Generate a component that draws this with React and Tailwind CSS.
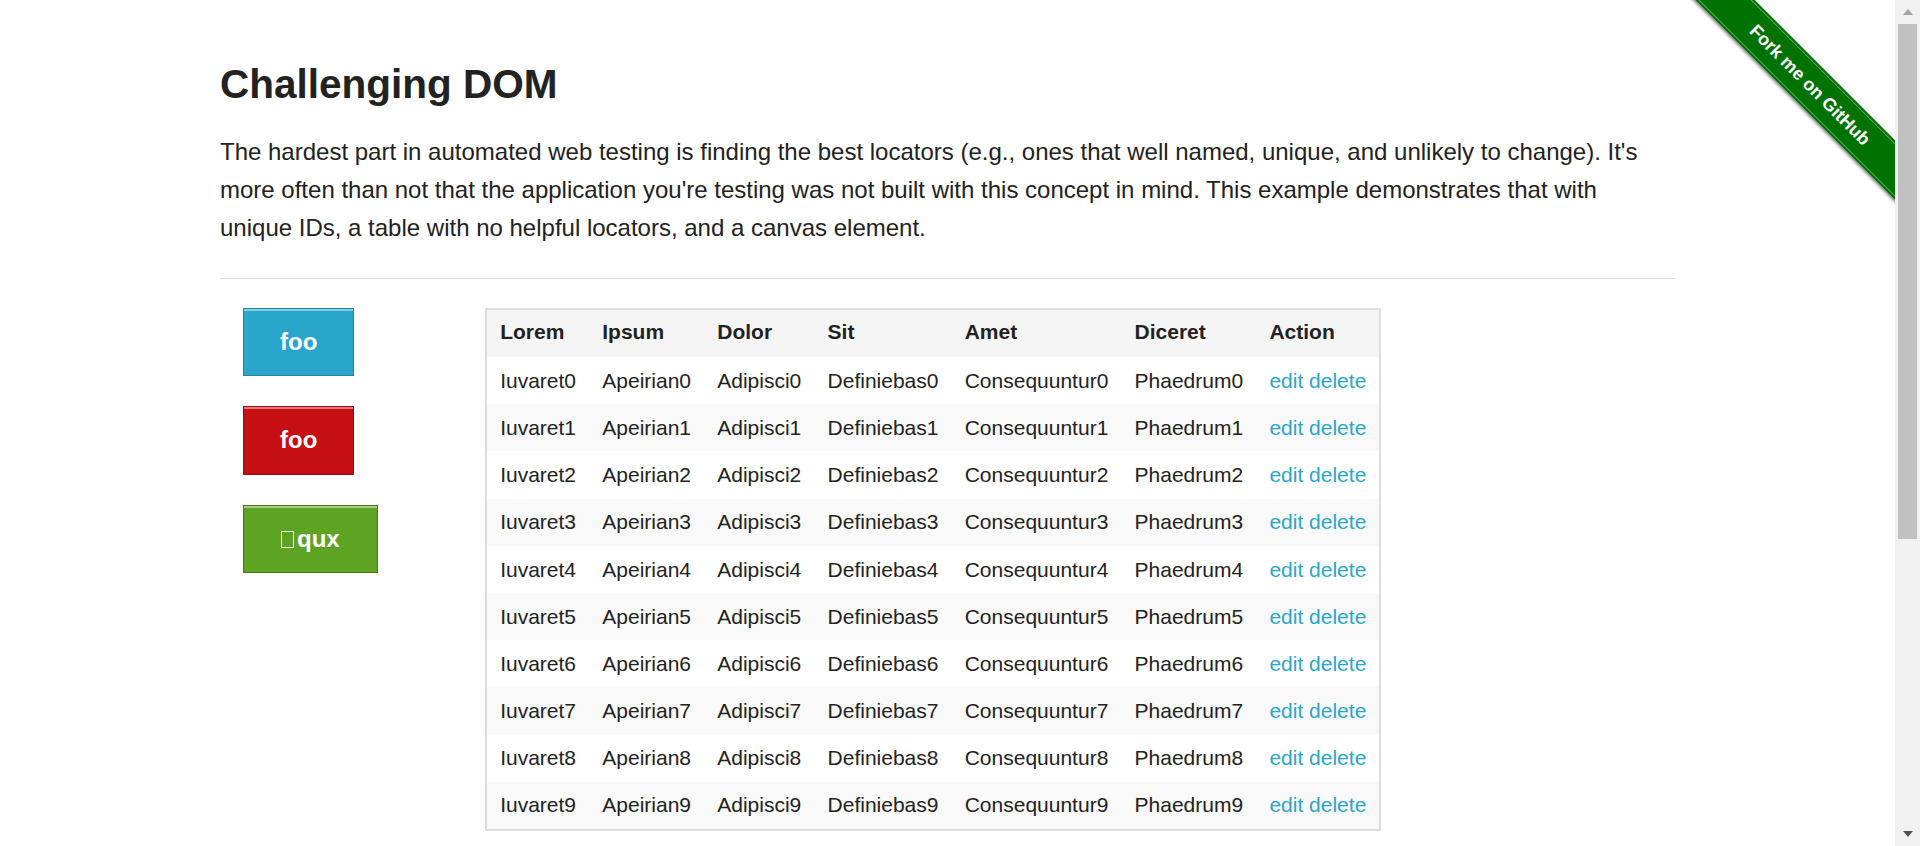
import React from "react";

const columns = ["Lorem", "Ipsum", "Dolor", "Sit", "Amet", "Diceret", "Action"];

const rows = Array.from({ length: 10 }, (_, i) => [
  `Iuvaret${i}`,
  `Apeirian${i}`,
  `Adipisci${i}`,
  `Definiebas${i}`,
  `Consequuntur${i}`,
  `Phaedrum${i}`
]);

function Ribbon() {
  return (
    <div className="pointer-events-none absolute right-0 top-0 h-[224px] w-[224px] overflow-hidden">
      <div className="absolute left-[-31px] top-[64px] flex h-[42px] w-[340px] rotate-45 items-center justify-center bg-[#007200] shadow-[0_2px_3px_rgba(0,0,0,0.45)]">
        <div className="absolute inset-x-0 top-[2px] border-t border-white/40" />
        <div className="absolute inset-x-0 bottom-[2px] border-t border-white/40" />
        <span className="text-[18px] font-bold text-white">Fork me on GitHub</span>
      </div>
    </div>
  );
}

function Scrollbar() {
  return (
    <div className="flex w-[25px] shrink-0 flex-col items-center bg-[#f1f1f1]">
      <div className="flex h-[24px] items-center justify-center">
        <svg width="10" height="6" viewBox="0 0 10 6">
          <path d="M0 6 L5 0 L10 6 Z" fill="#a3a3a3" />
        </svg>
      </div>
      <div className="h-[515px] w-[19px] bg-[#c1c1c1]" />
      <div className="flex-1" />
      <div className="flex h-[24px] items-center justify-center">
        <svg width="10" height="6" viewBox="0 0 10 6">
          <path d="M0 0 L5 6 L10 0 Z" fill="#505050" />
        </svg>
      </div>
    </div>
  );
}

function Button({ color, children }) {
  return (
    <a
      href="#"
      className={[
        "inline-flex items-center border py-[20px] text-[24px] font-bold leading-[26.5px] text-white shadow-[inset_0_2px_0_rgba(255,255,255,0.45)]",
        color
      ].join(" ")}
    >
      {children}
    </a>
  );
}

export default function App() {
  return (
    <div className="flex h-[846px] w-[1920px] overflow-hidden bg-white font-['Liberation_Sans',Arial,Helvetica,sans-serif] text-[#222]">
      <div className="relative flex-1 overflow-hidden">
        <Ribbon />
        <div className="mx-auto w-[1455px] pt-[59px]">
          <h3 className="mb-[23px] text-[40.5px] font-bold leading-[50.6px]">Challenging DOM</h3>
          <p className="mb-[30px] text-[24px] leading-[38.4px]">
            The hardest part in automated web testing is finding the best locators (e.g., ones that well named,
            unique, and unlikely to change). It's more often than not that the application you're testing was not
            built with this concept in mind. This example demonstrates that with unique IDs, a table with no helpful
            locators, and a canvas element.
          </p>
          <hr className="mb-[29px] border-0 border-t border-[#dddddd]" />

          <div className="flex items-start">
            <div className="flex w-[265px] shrink-0 flex-col items-start gap-[30px] pl-[23px]">
              <Button color="border-[#2284a1] bg-[#2ba6cb] px-[36px]">foo</Button>
              <Button color="border-[#970b0e] bg-[#c60f13] px-[36px]">foo</Button>
              <Button color="border-[#457a1a] bg-[#5da423] px-[37px]">
                <span className="mr-[3px] inline-block h-[17px] w-[13px] border-[1.5px] border-white" />
                qux
              </Button>
            </div>

            <table className="border-2 border-[#dddddd] text-[21px]">
              <thead>
                <tr className="bg-[#f5f5f5]">
                  {columns.map((col) => (
                    <th key={col} className="px-[13.125px] pb-[13.1px] pt-[10.5px] text-left font-bold leading-[23.6px]">
                      {col}
                    </th>
                  ))}
                </tr>
              </thead>
              <tbody>
                {rows.map((row, i) => (
                  <tr key={i} className={i % 2 === 1 ? "bg-[#f9f9f9]" : "bg-white"}>
                    {row.map((cell) => (
                      <td key={cell} className="whitespace-nowrap px-[13.125px] py-[11.8px] leading-[23.6px]">
                        {cell}
                      </td>
                    ))}
                    <td className="whitespace-nowrap px-[13.125px] py-[11.8px] leading-[23.6px]">
                      <a href="#" className="text-[#2ba6cb]">edit</a>{" "}
                      <a href="#" className="text-[#2ba6cb]">delete</a>
                    </td>
                  </tr>
                ))}
              </tbody>
            </table>
          </div>
        </div>
      </div>
      <Scrollbar />
    </div>
  );
}
